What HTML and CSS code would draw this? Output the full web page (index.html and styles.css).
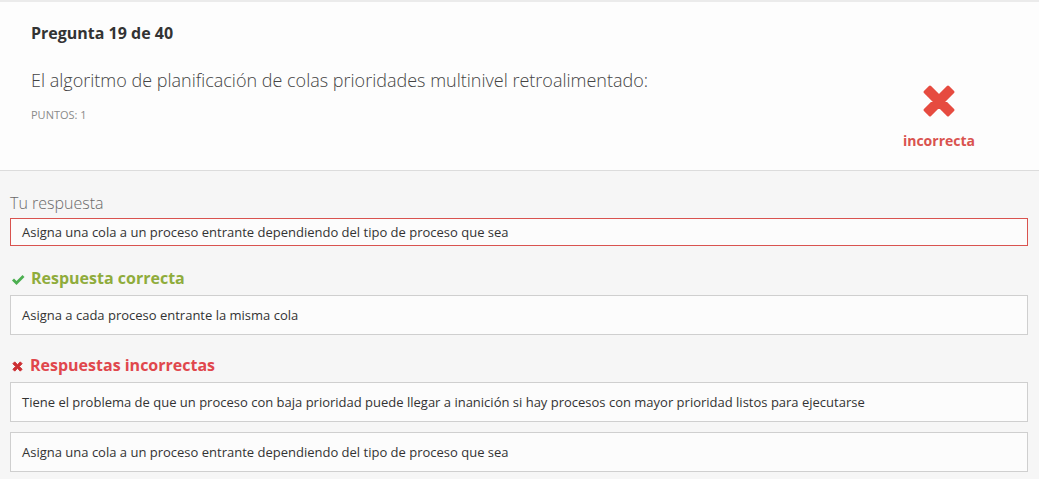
FILE: index.html
```html
<!DOCTYPE html>
<html lang="es">
<head>
<meta charset="utf-8">
<link rel="stylesheet" href="styles.css">
</head>
<body>
<div class="page">
  <header class="question">
    <div class="q-main">
      <h2 class="q-num">Pregunta 19 de 40</h2>
      <p class="q-text">El algoritmo de planificación de colas prioridades multinivel retroalimentado:</p>
      <p class="q-points">Puntos: 1</p>
    </div>
    <div class="q-status">
      <svg class="big-x" viewBox="0 0 34 34" width="34" height="34" aria-hidden="true">
        <path d="M3 8 L8 3 L17 12 L26 3 L31 8 L22 17 L31 26 L26 31 L17 22 L8 31 L3 26 L12 17 Z" fill="#e64b40" stroke="#e64b40" stroke-width="3" stroke-linejoin="round"/>
      </svg>
      <span class="status-label">incorrecta</span>
    </div>
  </header>
  <section class="answers">
    <h3 class="your-title">Tu respuesta</h3>
    <div class="answer answer-wrong">Asigna una cola a un proceso entrante dependiendo del tipo de proceso que sea</div>

    <h3 class="sec-title correct">
      <svg class="ico" viewBox="0 0 14 12" width="14" height="12" aria-hidden="true">
        <path d="M1 6.5 L3 4.5 L5.5 7 L11.5 1 L13.5 3 L5.5 11 Z" fill="#4caf50"/>
      </svg>
      Respuesta correcta
    </h3>
    <div class="answer">Asigna a cada proceso entrante la misma cola</div>

    <h3 class="sec-title incorrect">
      <svg class="ico" viewBox="0 0 14 14" width="13" height="13" aria-hidden="true">
        <path d="M2 4 L4 2 L7 5 L10 2 L12 4 L9 7 L12 10 L10 12 L7 9 L4 12 L2 10 L5 7 Z" fill="#cc2f33" stroke="#cc2f33" stroke-width="1" stroke-linejoin="round"/>
      </svg>
      Respuestas incorrectas
    </h3>
    <div class="answer">Tiene el problema de que un proceso con baja prioridad puede llegar a inanición si hay procesos con mayor prioridad listos para ejecutarse</div>
    <div class="answer gap">Asigna una cola a un proceso entrante dependiendo del tipo de proceso que sea</div>
  </section>
</div>
</body>
</html>
```

FILE: styles.css
```css
* { box-sizing: border-box; }
html, body { margin: 0; padding: 0; }
body {
  font-family: "Open Sans", "Liberation Sans", sans-serif;
  background: #f6f6f6;
  color: #333;
  width: 1039px;
  height: 479px;
  overflow: hidden;
}
.page { border-top: 2px solid #ebebeb; }
.question {
  background: #fdfdfd;
  border-bottom: 1px solid #dcdcdc;
  height: 169px;
  display: flex;
  justify-content: space-between;
  padding: 0 64px 0 31px;
}
.q-main { padding-top: 20px; }
.q-num {
  margin: 0;
  font-size: 16px;
  font-weight: 700;
  color: #333;
  line-height: 22px;
}
.q-text {
  margin: 24px 0 0;
  font-size: 18px;
  font-weight: 300;
  color: #444;
  line-height: 24px;
}
.q-points {
  margin: 16px 0 0;
  font-size: 11px;
  text-transform: uppercase;
  color: #8a8a8a;
  line-height: 14px;
}
.q-status {
  display: flex;
  flex-direction: column;
  align-items: center;
  padding-top: 82px;
}
.big-x { display: block; }
.status-label {
  margin-top: 13px;
  font-size: 14px;
  font-weight: 700;
  color: #d9534f;
  line-height: 20px;
}
.answers { padding: 21px 11px 0 10px; }
.your-title {
  margin: 0;
  font-size: 16px;
  font-weight: 300;
  color: #6a6a6a;
  line-height: 22px;
}
.answer {
  background: #fcfcfc;
  border: 1px solid #cfcfcf;
  font-size: 13px;
  color: #333;
  padding: 10px 11px;
  line-height: 18px;
}
.answer-wrong {
  margin-top: 4px;
  border-color: #d9534f;
  padding: 4px 11px;
}
.sec-title {
  margin: 21px 0 6px;
  font-size: 16px;
  font-weight: 700;
  line-height: 22px;
  display: flex;
  align-items: center;
  gap: 6px;
}
.sec-title .ico { margin-left: 1px; margin-top: 3px; }
.sec-title.correct { color: #8fac3c; }
.sec-title.incorrect { color: #e0474c; margin-top: 19px; }
.answer.gap { margin-top: 10px; }
```
